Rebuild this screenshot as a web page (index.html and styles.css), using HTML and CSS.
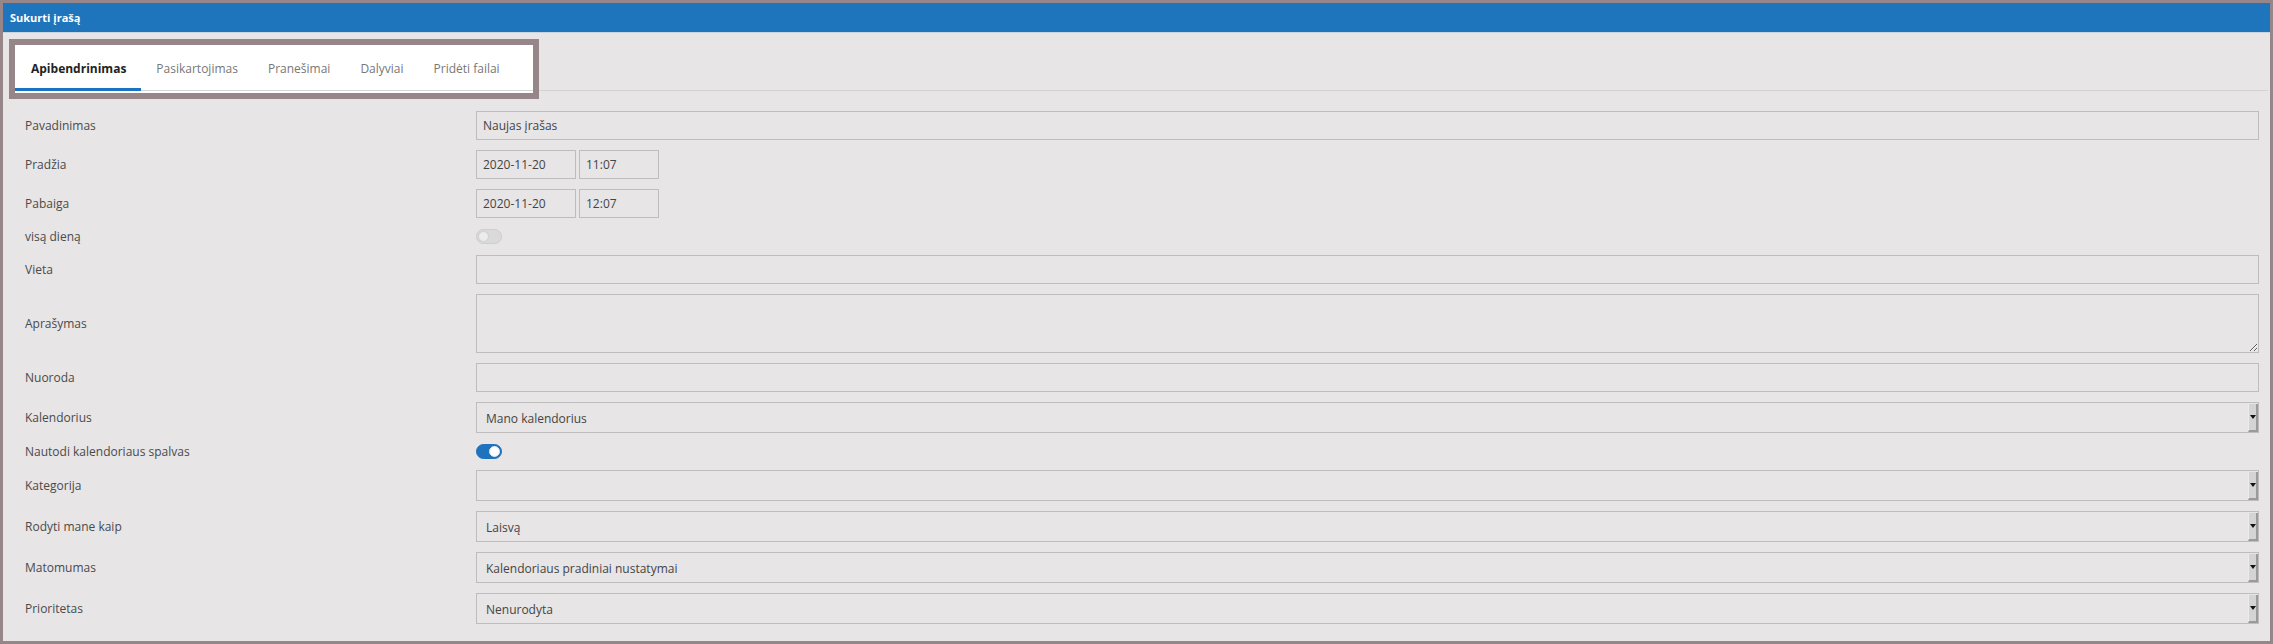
FILE: index.html
```html
<!DOCTYPE html>
<html lang="lt">
<head>
    <meta charset="UTF-8">
    <meta name="viewport" content="width=device-width, initial-scale=1.0">
    <title>Sukurti įrašą</title>
    <link rel="stylesheet" href="styles.css">
</head>
<body>
    <div class="dialog">
        <div class="dialog-header">Sukurti įrašą</div>

        <!-- Skirtukai -->
        <div class="tab-bar">
            <div class="tab-box">
                <ul class="tabs">
                    <li class="tab active">Apibendrinimas</li>
                    <li class="tab">Pasikartojimas</li>
                    <li class="tab">Pranešimai</li>
                    <li class="tab">Dalyviai</li>
                    <li class="tab">Pridėti failai</li>
                </ul>
            </div>
            <div class="tab-rest"></div>
        </div>

        <!-- Forma -->
        <form class="event-form">
            <label class="field-label">Pavadinimas</label>
            <input class="text-input" type="text" value="Naujas įrašas">

            <label class="field-label">Pradžia</label>
            <div class="date-row">
                <input class="text-input date-input" type="text" value="2020-11-20">
                <input class="text-input time-input" type="text" value="11:07">
            </div>

            <label class="field-label">Pabaiga</label>
            <div class="date-row">
                <input class="text-input date-input" type="text" value="2020-11-20">
                <input class="text-input time-input" type="text" value="12:07">
            </div>

            <label class="field-label">visą dieną</label>
            <div class="toggle-row">
                <span class="toggle"><span class="knob"></span></span>
            </div>

            <label class="field-label">Vieta</label>
            <input class="text-input" type="text" value="">

            <label class="field-label">Aprašymas</label>
            <textarea class="text-area"></textarea>

            <label class="field-label">Nuoroda</label>
            <input class="text-input" type="text" value="">

            <label class="field-label">Kalendorius</label>
            <div class="select">
                <span class="select-value">Mano kalendorius</span>
                <span class="select-btn"></span>
            </div>

            <label class="field-label">Nautodi kalendoriaus spalvas</label>
            <div class="toggle-row">
                <span class="toggle on"><span class="knob"></span></span>
            </div>

            <label class="field-label">Kategorija</label>
            <div class="select">
                <span class="select-value"></span>
                <span class="select-btn"></span>
            </div>

            <label class="field-label">Rodyti mane kaip</label>
            <div class="select">
                <span class="select-value">Laisvą</span>
                <span class="select-btn"></span>
            </div>

            <label class="field-label">Matomumas</label>
            <div class="select">
                <span class="select-value">Kalendoriaus pradiniai nustatymai</span>
                <span class="select-btn"></span>
            </div>

            <label class="field-label">Prioritetas</label>
            <div class="select">
                <span class="select-value">Nenurodyta</span>
                <span class="select-btn"></span>
            </div>
        </form>
    </div>
</body>
</html>
```

FILE: styles.css
```css
* {
    margin: 0;
    padding: 0;
    box-sizing: border-box;
    font-family: 'Open Sans', sans-serif;
}

body {
    background-color: #e7e5e6;
}

.dialog {
    height: 644px;
    border: 3px solid #968589;
    background-color: #e7e5e6;
    display: flex;
    flex-direction: column;
}

.dialog-header {
    height: 30px;
    background-color: #1f75bc;
    border-bottom: 1px solid #c9d4de;
    color: white;
    font-size: 11px;
    font-weight: bold;
    padding-left: 7px;
    display: flex;
    align-items: center;
}

/* Skirtukai */
.tab-bar {
    display: flex;
    align-items: flex-start;
    padding: 6px 2px 0 6px;
}

.tab-box {
    background-color: white;
    border: 6px solid #968589;
    padding-bottom: 2px;
}

.tabs {
    list-style: none;
    display: flex;
    border-bottom: 1px solid #d6d6d6;
    padding-right: 18px;
}

.tab {
    height: 46px;
    margin-bottom: -1px;
    padding: 3px 15px 0;
    border-bottom: 3px solid transparent;
    display: flex;
    align-items: center;
    font-size: 12px;
    color: #777;
}

.tab.active {
    color: #222;
    font-weight: bold;
    border-bottom-color: #1a72c2;
    padding-left: 16px;
}

.tab-rest {
    flex-grow: 1;
    height: 52px;
    border-bottom: 1px solid #d3d3d3;
}

/* Forma */
.event-form {
    display: grid;
    grid-template-columns: 451px 1fr;
    row-gap: 10px;
    padding: 12px 11px 0 22px;
}

.field-label {
    align-self: center;
    font-size: 12px;
    color: #4a4a4a;
}

.text-input {
    width: 100%;
    height: 29px;
    border: 1px solid #bdbdbd;
    background: transparent;
    padding: 0 6px;
    font-size: 12px;
    color: #444;
    outline: none;
}

.date-row {
    display: flex;
    gap: 3px;
}

.date-input {
    width: 100px;
}

.time-input {
    width: 80px;
}

.toggle-row {
    height: 16px;
    display: flex;
    align-items: center;
}

.toggle {
    width: 26px;
    height: 15px;
    border-radius: 8px;
    background-color: #dadada;
    border: 1px solid #cecece;
    display: flex;
    align-items: center;
    padding: 0 1px;
}

.toggle .knob {
    width: 11px;
    height: 11px;
    border-radius: 50%;
    background-color: #ececec;
    border: 1px solid #d0d0d0;
}

.toggle.on {
    background-color: #1f72bd;
    border-color: #1f72bd;
    justify-content: flex-end;
}

.toggle.on .knob {
    background-color: white;
    border-color: #dfe8f0;
}

.text-area {
    width: 100%;
    height: 59px;
    border: 1px solid #bdbdbd;
    background: transparent;
    resize: vertical;
    outline: none;
}

.select {
    height: 31px;
    border: 1px solid #bdbdbd;
    display: flex;
    padding: 1px 0 0;
}

.select-value {
    flex-grow: 1;
    padding-left: 9px;
    display: flex;
    align-items: center;
    font-size: 12px;
    color: #444;
}

.select-btn {
    width: 10px;
    background-color: #d4d4d4;
    border-left: 1px solid #ececec;
    border-right: 2px solid #9a9a9a;
    border-bottom: 2px solid #9a9a9a;
    display: flex;
    align-items: center;
    justify-content: center;
}

.select-btn::after {
    content: "";
    border-left: 3px solid transparent;
    border-right: 3px solid transparent;
    border-top: 4px solid #111;
}
```
